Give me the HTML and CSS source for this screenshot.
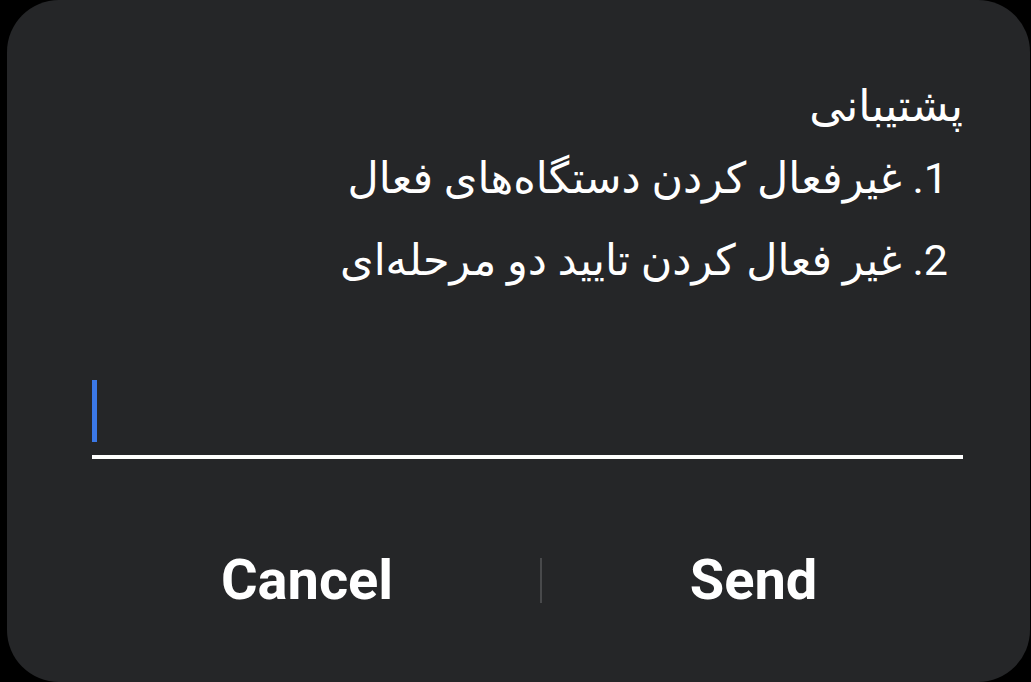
FILE: index.html
```html
<!DOCTYPE html>
<html lang="fa">
<head>
<meta charset="utf-8">
<title>پشتیبانی</title>
<link rel="stylesheet" href="styles.css">
</head>
<body>
<div class="card">
  <div class="message" dir="rtl">
    <div class="title">پشتیبانی</div>
    <div class="item">1. غیرفعال کردن دستگاه‌های فعال</div>
    <div class="item">2. غیر فعال کردن تایید دو مرحله‌ای</div>
  </div>
  <div class="field"><span class="caret"></span></div>
  <div class="actions">
    <div class="btn">Cancel</div>
    <div class="divider"></div>
    <div class="btn">Send</div>
  </div>
</div>
</body>
</html>
```

FILE: styles.css
```css
html, body {
  margin: 0;
  padding: 0;
  background: #000;
}
body {
  width: 1031px;
  height: 682px;
  overflow: hidden;
}
.card {
  margin-left: 7px;
  width: 1023px;
  height: 682px;
  box-sizing: border-box;
  background: #252628;
  border-radius: 52px;
  padding: 75px 67px 0 85px;
  display: flex;
  flex-direction: column;
  color: #fff;
  font-family: Roboto, "DejaVu Sans", sans-serif;
}
.message {
  direction: rtl;
  text-align: right;
}
.title {
  font-size: 44px;
  line-height: 62px;
}
.item {
  font-size: 43px;
  line-height: 82px;
  padding-right: 15px;
}
.field {
  margin-top: 79px;
  display: flex;
  align-items: flex-end;
  padding-bottom: 13px;
  border-bottom: 4px solid #fff;
}
.caret {
  display: block;
  width: 5px;
  height: 62px;
  background: #3b78e7;
}
.actions {
  margin: 91px -2px 0 -18px;
  display: grid;
  grid-template-columns: 466px 2px 1fr;
  align-items: center;
  height: 60px;
}
.btn {
  text-align: center;
  font-family: Roboto, "Liberation Sans", sans-serif;
  font-weight: 700;
  font-size: 56px;
  line-height: 60px;
}
.divider {
  width: 2px;
  height: 45px;
  background: #48494b;
}
```
